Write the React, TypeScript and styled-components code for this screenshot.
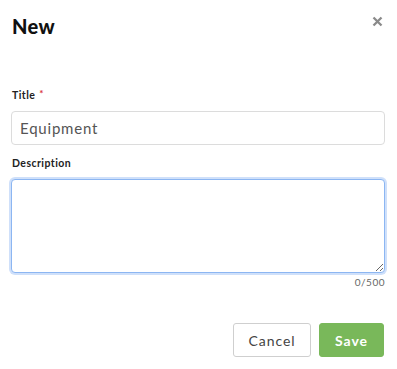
import React from "react";
import styled, { createGlobalStyle } from "styled-components";

const Global = createGlobalStyle`
  html, body { margin: 0; padding: 0; background: #fff; }
  body { font-family: "Lato", "Noto Sans", sans-serif; }
  * { box-sizing: border-box; }
`;

const Dialog = styled.div`
  width: 397px;
  height: 369px;
  padding: 0 12px 0 11px;
  display: flex;
  flex-direction: column;
  background: #fff;
`;

const Header = styled.div`
  display: flex;
  align-items: center;
  justify-content: space-between;
  height: 52px;
  padding: 0 1px;
`;

const Heading = styled.h2`
  margin: 0;
  font-size: 20px;
  font-weight: 900;
  color: #111;
  letter-spacing: 0.4px;
`;

const Close = styled.button`
  align-self: flex-start;
  margin-top: 16px;
  border: 0;
  background: transparent;
  padding: 0;
  margin-right: 1px;
  width: 11px;
  height: 11px;
  display: flex;
  cursor: pointer;
`;

const Field = styled.div<{ $top: number }>`
  display: flex;
  flex-direction: column;
  margin-top: ${(p) => p.$top}px;
`;

const Label = styled.label`
  font-size: 10.5px;
  font-weight: 700;
  color: #222;
  padding-left: 1px;
  margin-bottom: 10px;
  line-height: 12px;
  letter-spacing: 0.45px;
`;

const Req = styled.span`
  color: #d9353a;
  margin-left: 4px;
  font-size: 10px;
  vertical-align: 2px;
`;

const Input = styled.input`
  height: 34px;
  width: 100%;
  border: 1px solid #dcdcdc;
  border-radius: 4px;
  padding: 0 8px;
  font-family: inherit;
  font-size: 15px;
  color: #555;
  outline: none;
  letter-spacing: 0.8px;
`;

const TextArea = styled.textarea`
  height: 94px;
  width: 100%;
  border: 1px solid #8cb6f2;
  border-radius: 4px;
  box-shadow: 0 0 0 2px #cfe0fa;
  font-family: inherit;
  font-size: 14px;
  outline: none;
  resize: vertical;
  display: block;
`;

const Counter = styled.div`
  align-self: flex-end;
  margin-top: 3px;
  font-size: 10px;
  color: #666;
  letter-spacing: 0.5px;
`;

const Footer = styled.div`
  display: flex;
  justify-content: flex-end;
  gap: 8px;
  margin-top: 35px;
  padding-right: 1px;
`;

const Button = styled.button<{ $primary?: boolean }>`
  height: 34px;
  border-radius: 3px;
  font-family: inherit;
  font-size: 14px;
  padding: 0;
  cursor: pointer;
  ${(p) =>
    p.$primary
      ? `
    width: 65px;
    background: #79b85a;
    border: 1px solid #79b85a;
    color: #fff;
    font-weight: 700;
    letter-spacing: 0.9px;
  `
      : `
    width: 78px;
    background: #fff;
    border: 1px solid #cfcfcf;
    color: #444;
    font-weight: 400;
    letter-spacing: 0.9px;
  `}
`;

export default function App() {
  return (
    <>
      <Global />
      <Dialog>
        <Header>
          <Heading>New</Heading>
          <Close aria-label="Close">
            <svg width="11" height="11" viewBox="0 0 11 11">
              <path d="M1.5 1.5 L9.5 9.5 M9.5 1.5 L1.5 9.5" stroke="#8a8a8a" strokeWidth="2.3" />
            </svg>
          </Close>
        </Header>
        <Field $top={35}>
          <Label>
            Title<Req>*</Req>
          </Label>
          <Input defaultValue="Equipment" />
        </Field>
        <Field $top={12}>
          <Label>Description</Label>
          <TextArea autoFocus />
          <Counter>0/500</Counter>
        </Field>
        <Footer>
          <Button>Cancel</Button>
          <Button $primary>Save</Button>
        </Footer>
      </Dialog>
    </>
  );
}
